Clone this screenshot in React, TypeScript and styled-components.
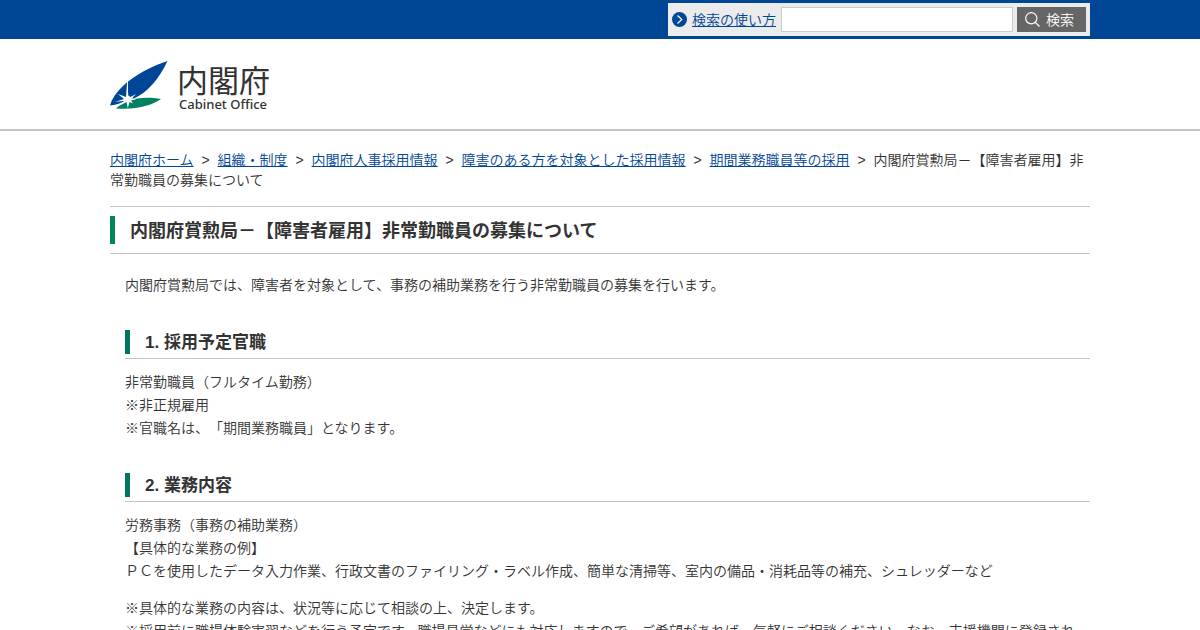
import React from "react";
import styled, { createGlobalStyle } from "styled-components";

const GlobalStyle = createGlobalStyle`
  * { box-sizing: border-box; }
  body {
    margin: 0;
    background: #fff;
    color: #333;
    font-family: "Liberation Sans", "Noto Sans CJK JP", sans-serif;
    font-size: 14px;
    font-weight: 350;
    line-height: 23px;
    text-spacing-trim: space-all;
  }
  a { color: #004697; text-decoration: underline; }
`;

const Container = styled.div`
  max-width: 980px;
  margin: 0 auto;
`;

const TopBar = styled.div`
  background: #004697;
  padding: 3px 0;
`;

const TopInner = styled(Container)`
  display: flex;
  justify-content: flex-end;
`;

const SearchForm = styled.form`
  display: flex;
  align-items: center;
  background: #ebebeb;
  padding: 4px;
`;

const HelpLink = styled.a`
  display: flex;
  align-items: center;
  gap: 5px;
  margin-right: 5px;
  line-height: 20px;
`;

const SearchInput = styled.input`
  width: 232px;
  height: 25px;
  margin: 0 4px 0 0;
  padding: 0 4px;
  border: 1px solid #ccc;
  background: #fff;
  font: inherit;
`;

const SearchButton = styled.button`
  display: flex;
  align-items: center;
  justify-content: center;
  gap: 6px;
  width: 69px;
  height: 25px;
  padding: 0 4px 0 0;
  border: 0;
  background: #666;
  color: #fff;
  font: inherit;
  line-height: 20px;
`;

const Header = styled.header`
  border-bottom: 2px solid #c4c4c4;
  padding: 22px 0 18px;
`;

const Brand = styled.a`
  display: inline-flex;
  align-items: flex-start;
  gap: 9px;
  height: 50px;
  color: #333;
  text-decoration: none;
  vertical-align: top;
`;

const BrandText = styled.span`
  display: flex;
  flex-direction: column;
`;

const BrandName = styled.span`
  font-family: "Noto Sans CJK JP", sans-serif;
  font-size: 31px;
  font-weight: 400;
  line-height: 36px;
`;

const BrandSub = styled.span`
  padding-left: 2px;
  font-family: "Noto Sans", sans-serif;
  font-size: 13px;
  font-weight: 500;
  line-height: 14px;
`;

const Breadcrumb = styled.ol`
  margin: 19px 0 16px;
  padding: 0;
  list-style: none;
  line-height: 20px;
`;

const Crumb = styled.li`
  display: inline;
  &:not(:last-child)::after {
    content: ">";
    display: inline-block;
    width: 24px;
    text-align: center;
  }
`;

const PageTitle = styled.h1`
  margin: 0 0 20px;
  padding: 9px 0;
  border: solid #c4c4c4;
  border-width: 1px 0;
  font-size: 18px;
  line-height: 26px;
`;

const TitleText = styled.span<{ $color: string }>`
  display: block;
  padding: 2px 0 0 15px;
  border-left: 5px solid ${(p) => p.$color};
`;

const Content = styled.div`
  padding-left: 15px;
`;

const SectionTitle = styled.h2`
  margin: 33px 0 12px;
  padding-bottom: 4px;
  border-bottom: 1px solid #c4c4c4;
  font-size: 17px;
  line-height: 22px;
`;

const Paragraph = styled.p`
  margin: 0 0 14px;
`;

const crumbs = [
  "内閣府ホーム",
  "組織・制度",
  "内閣府人事採用情報",
  "障害のある方を対象とした採用情報",
  "期間業務職員等の採用",
];

const Emblem = () => (
  <svg width="58" height="50" viewBox="0 0 58 50" aria-hidden="true">
    <path d="M57.500 0C43 5 25 13 12 26C5 33 2 38 0 44.500C7 44 12 41.500 17 38.500L24 37.500C38 31 49 18 57.500 0Z" fill="#004697" />
    <path d="M6 47.500C13 40 30 34 51 38C42 44 28 49 6 47.500Z" fill="#008262" />
    <path
      d="M17.200 20L18.300 34.500L20.500 36L26 33L22 37.300L26 38.500L21 39.600L23 42.500L19.500 41L17.800 47L16.400 41L10 44.500L14.500 39.800L5 41L14 38L8 33L16 36Z"
      fill="#fff"
    />
    <path d="M17.500 20V36" stroke="#fff" strokeWidth="0.900" />
  </svg>
);

const HelpIcon = () => (
  <svg width="15" height="15" viewBox="0 0 15 15" aria-hidden="true">
    <circle cx="7.500" cy="7.500" r="7.500" fill="#004697" />
    <path d="M5.500 3.500L9.800 7.500L5.500 11.500" fill="none" stroke="#fff" strokeWidth="1.200" />
  </svg>
);

const SearchIcon = () => (
  <svg width="15" height="15" viewBox="0 0 15 15" fill="none" stroke="#fff" strokeWidth="1.200" aria-hidden="true">
    <circle cx="6.300" cy="6.300" r="5.600" />
    <path d="M10.300 10.300L14.500 14.500" />
  </svg>
);

const Section = ({ title, children }: { title: string; children: React.ReactNode }) => (
  <section>
    <SectionTitle>
      <TitleText $color="#007560">{title}</TitleText>
    </SectionTitle>
    {children}
  </section>
);

export default function App() {
  return (
    <>
      <GlobalStyle />
      <TopBar>
        <TopInner>
          <SearchForm role="search" onSubmit={(e) => e.preventDefault()}>
            <HelpLink href="#help">
              <HelpIcon />
              検索の使い方
            </HelpLink>
            <SearchInput type="text" aria-label="検索" />
            <SearchButton type="submit">
              <SearchIcon />
              検索
            </SearchButton>
          </SearchForm>
        </TopInner>
      </TopBar>
      <Header>
        <Container>
          <Brand href="#home">
            <Emblem />
            <BrandText>
              <BrandName>内閣府</BrandName>
              <BrandSub>Cabinet Office</BrandSub>
            </BrandText>
          </Brand>
        </Container>
      </Header>
      <Container as="main">
        <Breadcrumb>
          {crumbs.map((c) => (
            <Crumb key={c}>
              <a href="#crumb">{c}</a>
            </Crumb>
          ))}
          <Crumb>内閣府賞勲局－【障害者雇用】非常勤職員の募集について</Crumb>
        </Breadcrumb>
        <PageTitle>
          <TitleText $color="#008658">内閣府賞勲局－【障害者雇用】非常勤職員の募集について</TitleText>
        </PageTitle>
        <Content>
          <Paragraph>
            内閣府賞勲局では、障害者を対象として、事務の補助業務を行う非常勤職員の募集を行います。
          </Paragraph>
          <Section title="1. 採用予定官職">
            <Paragraph>
              非常勤職員（フルタイム勤務）
              <br />
              ※非正規雇用
              <br />
              ※官職名は、「期間業務職員」となります。
            </Paragraph>
          </Section>
          <Section title="2. 業務内容">
            <Paragraph>
              労務事務（事務の補助業務）
              <br />
              【具体的な業務の例】
              <br />
              ＰＣを使用したデータ入力作業、行政文書のファイリング・ラベル作成、簡単な清掃等、室内の備品・消耗品等の補充、シュレッダーなど
            </Paragraph>
            <Paragraph>
              ※具体的な業務の内容は、状況等に応じて相談の上、決定します。
              <br />
              ※採用前に職場体験実習などを行う予定です。職場見学などにも対応しますので、ご希望があれば、気軽にご相談ください。なお、支援機関に登録され
            </Paragraph>
          </Section>
        </Content>
      </Container>
    </>
  );
}
